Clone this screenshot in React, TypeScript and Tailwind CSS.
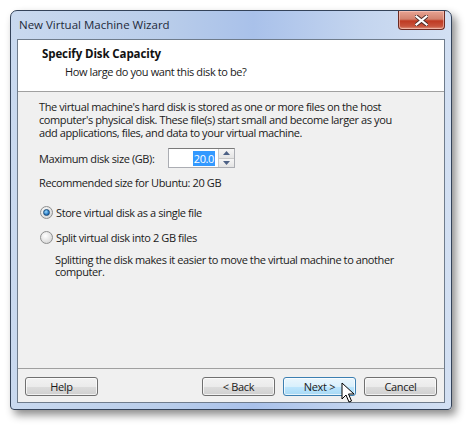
import React from "react";

const font = { fontFamily: '"Open Sans", "Noto Sans", sans-serif' };

function WinButton({
  label,
  hot = false,
  className = "",
}: {
  label: string;
  hot?: boolean;
  className?: string;
}) {
  return (
    <button
      className={`h-[19px] w-[73px] rounded-[3px] border text-[11px] leading-none tracking-[-0.3px] text-[#1a1a1a] ${
        hot
          ? "border-[#3c7fb1] bg-[linear-gradient(#eaf6fd_0%,#d9f0fc_50%,#bee6fd_50%,#a7d9f5_100%)]"
          : "border-[#707070] bg-[linear-gradient(#f2f2f2_0%,#ebebeb_50%,#dddddd_50%,#cfcfcf_100%)]"
      } shadow-[inset_0_0_0_1px_rgba(255,255,255,0.7)] ${className}`}
    >
      {label}
    </button>
  );
}

function Radio({ checked }: { checked: boolean }) {
  return (
    <span className="relative flex h-[13px] w-[13px] shrink-0 items-center justify-center rounded-full border border-[#8e8f8f] bg-[radial-gradient(circle_at_40%_35%,#ffffff,#dcdcdc_70%,#c9c9c9)]">
      {checked && (
        <span className="h-[7px] w-[7px] rounded-full border border-[#1c4e7a] bg-[radial-gradient(circle_at_40%_35%,#9bdcff,#2a7ac4_60%,#0d3f73)]" />
      )}
    </span>
  );
}

// one text line per row, so the 13px rows match the dialog's line spacing
function Lines({ lines, h = 13, className = "" }: { lines: string[]; h?: number; className?: string }) {
  return (
    <div className={`flex flex-col whitespace-nowrap ${className}`}>
      {lines.map((l) => (
        <div key={l} className={`flex items-center ${h === 13 ? "h-[13px]" : "h-[12px]"}`}>
          {l}
        </div>
      ))}
    </div>
  );
}

export default function App() {
  return (
    <div className="relative h-[429px] w-[470px] bg-white pl-[10px] pt-[10px]" style={font}>
      <div className="flex h-[400px] w-[442px] flex-col rounded-t-[7px] rounded-b-[4px] border border-[#34435a] bg-[linear-gradient(90deg,#c9d9ef_0%,#b9cdea_35%,#a9c1ea_55%,#c4d5ef_80%,#d3e0f3_100%)] px-[6px] pb-[6px] shadow-[4px_5px_9px_rgba(0,0,0,0.45)]">
        {/* title bar */}
        <div className="flex h-[28px] items-start justify-between">
          <span className="pl-[2px] pt-[6px] text-[11.5px] leading-[16px] text-[#1e2a3a]">
            New Virtual Machine Wizard
          </span>
          <div className="flex h-[19px] w-[47px] items-center justify-center rounded-b-[4px] border border-t-0 border-[#6b2a22] bg-[linear-gradient(#e8a493_0%,#d3826e_45%,#bf3a22_55%,#c8543d_85%,#e09a82_100%)] shadow-[inset_0_0_0_1px_rgba(255,210,200,0.55)]">
            <svg width="13" height="11" viewBox="0 0 13 11">
              <path
                d="M1.5 1.5 L11.5 9.5 M11.5 1.5 L1.5 9.5"
                stroke="#4a2a26"
                strokeWidth="4"
                strokeLinecap="square"
              />
              <path
                d="M1.5 1.5 L11.5 9.5 M11.5 1.5 L1.5 9.5"
                stroke="#ffffff"
                strokeWidth="2.2"
                strokeLinecap="square"
              />
            </svg>
          </div>
        </div>

        {/* client area */}
        <div className="flex flex-1 flex-col border border-[#6f7c8c] bg-[#f0f0f0]">
          <div className="h-[52px] border-b border-[#a0a0a0] bg-white pl-[24px] pt-[6px]">
            <div className="text-[11.5px] font-bold leading-[16px] tracking-[-0.1px] text-[#111]">
              Specify Disk Capacity
            </div>
            <div className="pl-[23px] pt-[2px] text-[11px] leading-[16px] tracking-[-0.4px] text-[#1a1a1a]">
              How large do you want this disk to be?
            </div>
          </div>

          <div className="flex flex-1 flex-col pl-[21px] pt-[8px] text-[11px] leading-[13px] tracking-[-0.4px] text-[#1a1a1a]">
            <Lines
              lines={[
                "The virtual machine's hard disk is stored as one or more files on the host",
                "computer's physical disk. These file(s) start small and become larger as you",
                "add applications, files, and data to your virtual machine.",
              ]}
            />

            <div className="mt-[9px] flex items-center">
              <span className="w-[129px]">Maximum disk size (GB):</span>
              <div className="flex h-[20px] border border-[#abadb3] border-t-[#7a7a7a] bg-white">
                <div className="flex w-[49px] items-center justify-end pr-[3px]">
                  <span className="bg-[#3399ff] px-[1px] leading-[15px] text-white">20.0</span>
                </div>
                <div className="flex w-[16px] flex-col border-l border-[#c9c9c9]">
                  <div className="flex flex-1 items-center justify-center border-b border-[#c9c9c9] bg-[linear-gradient(#f6f6f6,#e4e4e4)]">
                    <svg width="7" height="4" viewBox="0 0 7 4">
                      <path d="M0 4 L3.5 0 L7 4 Z" fill="#4d6185" />
                    </svg>
                  </div>
                  <div className="flex flex-1 items-center justify-center bg-[linear-gradient(#f6f6f6,#e4e4e4)]">
                    <svg width="7" height="4" viewBox="0 0 7 4">
                      <path d="M0 0 L3.5 4 L7 0 Z" fill="#4d6185" />
                    </svg>
                  </div>
                </div>
              </div>
            </div>

            <p className="mt-[8px]">Recommended size for Ubuntu: 20 GB</p>

            <div className="mt-[17px] flex items-center gap-[3px] pl-[1px]">
              <Radio checked />
              <span>Store virtual disk as a single file</span>
            </div>
            <div className="mt-[12px] flex items-center gap-[3px] pl-[1px]">
              <Radio checked={false} />
              <span>Split virtual disk into 2 GB files</span>
            </div>
            <Lines
              h={12}
              className="mt-[9px] pl-[16px]"
              lines={[
                "Splitting the disk makes it easier to move the virtual machine to another",
                "computer.",
              ]}
            />
          </div>

          <div className="flex h-[34px] items-start border-t border-[#a0a0a0] px-[7px] pt-[8px]">
            <WinButton label="Help" />
            <div className="flex-1" />
            <WinButton label="< Back" />
            <WinButton label="Next >" hot className="ml-[8px]" />
            <WinButton label="Cancel" className="ml-[8px]" />
          </div>
        </div>
      </div>

      {/* mouse pointer */}
      <svg
        className="absolute left-[341px] top-[382px]"
        width="14"
        height="22"
        viewBox="0 0 14 22"
      >
        <path
          d="M1 1 L1 17 L5 13 L8 20 L10.5 19 L7.5 12 L13 12 Z"
          fill="#ffffff"
          stroke="#000000"
          strokeWidth="1"
          strokeLinejoin="miter"
        />
      </svg>
    </div>
  );
}
